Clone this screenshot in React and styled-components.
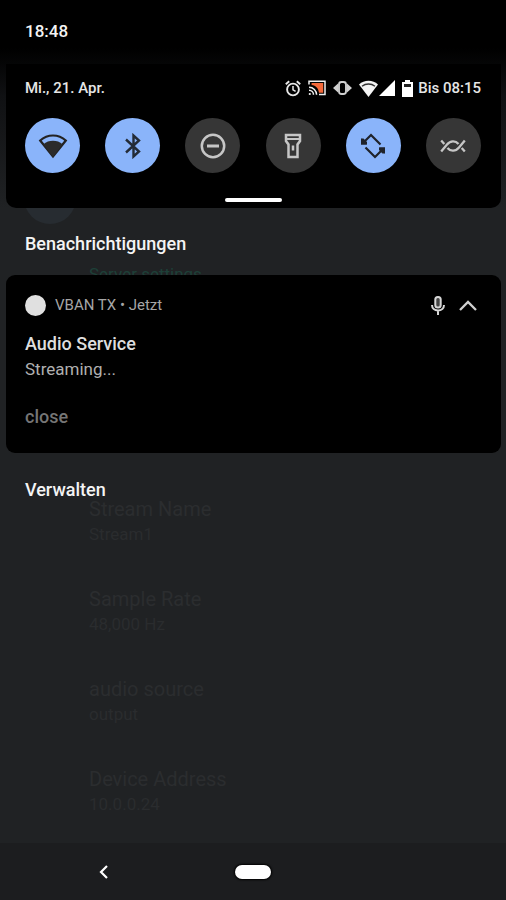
import React from 'react';
import styled, { createGlobalStyle } from 'styled-components';

const settings = [
    { name: 'Stream Name', value: 'Stream1' },
    { name: 'Sample Rate', value: '48,000 Hz' },
    { name: 'audio source', value: 'output' },
    { name: 'Device Address', value: '10.0.0.24' },
];

const tiles = [
    { label: 'WLAN', icon: WifiIcon, active: true },
    { label: 'Bluetooth', icon: BluetoothIcon, active: true },
    { label: 'Bitte nicht stören', icon: DndIcon, active: false },
    { label: 'Taschenlampe', icon: TorchIcon, active: false },
    { label: 'Automatisch drehen', icon: RotateIcon, active: true },
    { label: 'Datensparmodus', icon: CrossedWavesIcon, active: false },
];

function App() {
    return (
        <>
            <GlobalStyle />
            <Screen>
                <AppLayer aria-hidden="true">
                    <Avatar />
                    <SectionName>Server settings</SectionName>
                    <SettingList>
                        {settings.map((s) => (
                            <li key={s.name}>
                                <SettingName>{s.name}</SettingName>
                                <SettingValue>{s.value}</SettingValue>
                            </li>
                        ))}
                    </SettingList>
                </AppLayer>

                <Shade>
                    <Clock>18:48</Clock>
                    <QuickPanel>
                        <StatusRow>
                            <span>Mi., 21. Apr.</span>
                            <StatusIcons>
                                <AlarmIcon />
                                <CastIcon />
                                <VibrateIcon />
                                <SignalPair>
                                    <StatusWifiIcon />
                                    <CellIcon />
                                </SignalPair>
                                <Battery>
                                    <BatteryIcon />
                                    <span>Bis 08:15</span>
                                </Battery>
                            </StatusIcons>
                        </StatusRow>
                        <Tiles>
                            {tiles.map(({ label, icon: Icon, active }) => (
                                <Tile key={label} type="button" aria-label={label} aria-pressed={active} $active={active}>
                                    <Icon />
                                </Tile>
                            ))}
                        </Tiles>
                        <Handle />
                    </QuickPanel>

                    <Heading>Benachrichtigungen</Heading>

                    <Notification>
                        <NotificationHeader>
                            <AppDot />
                            <AppName>VBAN TX • Jetzt</AppName>
                            <MicIcon />
                            <CollapseButton type="button" aria-label="Minimieren">
                                <ChevronUp />
                            </CollapseButton>
                        </NotificationHeader>
                        <NotificationTitle>Audio Service</NotificationTitle>
                        <NotificationText>Streaming...</NotificationText>
                        <CloseButton type="button">close</CloseButton>
                    </Notification>

                    <ManageButton type="button">Verwalten</ManageButton>

                    <NavBar>
                        <NavButton type="button" aria-label="Zurück">
                            <BackIcon />
                        </NavButton>
                        <HomeButton type="button" aria-label="Startbildschirm" />
                        <span />
                    </NavBar>
                </Shade>
            </Screen>
        </>
    );
}

export default App;

/* status bar icons */

function AlarmIcon() {
    return (
        <svg width="16" height="17" viewBox="0 0 16 17" fill="none" stroke="#e8e8e8" strokeWidth="1.9">
            <circle cx="8" cy="9.5" r="5.9" />
            <path d="M8 6v3.8l2.6 1.6" strokeWidth="1.5" />
            <path d="M.8 4.2 4.2 1.3M15.2 4.2l-3.4-2.9" />
        </svg>
    );
}

function CastIcon() {
    return (
        <svg width="18" height="16" viewBox="0 0 18 16" fill="none" stroke="#f0f0f0" strokeWidth="1.5">
            <path d="M3.600 3h11.600v9.700H11C10.500 8.500 8 5.600 3.600 5z" fill="#f4693a" stroke="none" />
            <path d="M1 4.500V1.200h16v13.300h-6" />
            <path d="M1 7.200a7.600 7.600 0 0 1 7.600 7.600M1 10.300a4.500 4.500 0 0 1 4.500 4.500" />
            <circle cx="1.800" cy="14" r="1.100" fill="#f0f0f0" stroke="none" />
        </svg>
    );
}

function VibrateIcon() {
    return (
        <svg width="19" height="16" viewBox="0 0 19 16" fill="#d0d0d0">
            <path d="M5 3.500v9L0 8zM14 3.500v9L19 8z" />
            <rect x="6" y="2" width="7" height="12" rx="2.500" fill="#000" stroke="#d0d0d0" strokeWidth="1.900" />
        </svg>
    );
}

function StatusWifiIcon() {
    return (
        <svg width="19" height="17" viewBox="0 0 19 17" fill="#f5f5f5">
            <path d="M0 4.500a14 14 0 0 1 19 0L9.500 17z" />
            <path d="M3 6.200a10.500 10.500 0 0 1 13 0" fill="none" stroke="#333" strokeWidth="1.400" />
        </svg>
    );
}

function CellIcon() {
    return (
        <svg width="16" height="16" viewBox="0 0 16 16" fill="#fff">
            <path d="M16 0v16H0z" />
        </svg>
    );
}

function BatteryIcon() {
    return (
        <svg width="11" height="17" viewBox="0 0 11 17">
            <path d="M3 0h5v2h3v15H0V2h3z" fill="#fff" />
            <path d="M2 4h7v3H2z" fill="#222" />
        </svg>
    );
}

/* quick settings icons */

function WifiIcon() {
    return (
        <svg width="30" height="26" viewBox="0 0 30 26">
            <path d="M2.200 7.500C9.500 .8 20.500 .8 27.800 7.500L15 23.500z" fill="none" stroke="#232323" strokeWidth="2.200" />
            <path d="M5.500 11.200C10.500 6.600 19.500 6.600 24.500 11.200L15 24z" fill="#2b2b2b" />
        </svg>
    );
}

function BluetoothIcon() {
    return (
        <svg width="18" height="26" viewBox="0 0 18 26" fill="none" stroke="#232b36" strokeWidth="2.400">
            <path d="m2 6.500 13 12-5.500 5V2.500l5.500 5-13 12" />
        </svg>
    );
}

function DndIcon() {
    return (
        <svg width="26" height="26" viewBox="0 0 26 26" fill="none" stroke="#c6c6c6">
            <circle cx="13" cy="13" r="11.200" strokeWidth="2.500" />
            <path d="M7 13h12" strokeWidth="3" />
        </svg>
    );
}

function TorchIcon() {
    return (
        <svg width="18" height="26" viewBox="0 0 18 26" fill="none" stroke="#c6c6c6" strokeWidth="2.500">
            <path d="M2 2h14v6l-2.500 3.500v12.500h-9V11.500L2 8z" />
            <path d="M2 6h14" strokeWidth="2" />
            <path d="M9 12.500v5" />
        </svg>
    );
}

function RotateIcon() {
    return (
        <svg width="26" height="26" viewBox="0 0 26 26" fill="none" stroke="#1f232b" strokeWidth="2.200">
            <path d="M20.500 11.500 11 2 4 9" />
            <path d="M5.500 14.500 15 24l7-7" />
            <path d="M1 5.500v6h6zM25 20.500v-6h-6z" fill="#1f232b" stroke="none" />
            <path d="M1 5.500h2.500l3.500 3.500v2.500H1zM25 20.500h-2.500L19 17v-2.500h6z" fill="#1f232b" stroke="none" />
        </svg>
    );
}

function CrossedWavesIcon() {
    return (
        <svg width="26" height="14" viewBox="0 0 26 14" fill="none" stroke="#c6c6c6" strokeWidth="2.300">
            <path d="M1.200 12.500 7 5.500C10.500 1.300 15.500 1.300 18.500 5" />
            <path d="M24.800 1.500 19 8.500c-3.500 4.200-8.500 4.200-11.500.5" />
            <path d="M1.200 1.500 4.300 5M21.700 9l3.100 3.500" />
        </svg>
    );
}

/* notification and navigation icons */

function MicIcon() {
    return (
        <svg width="14" height="19" viewBox="0 0 14 19" fill="none" stroke="#d6d6d6" strokeWidth="2">
            <rect x="4.300" y="1" width="5.400" height="10.500" rx="2.500" fill="#444" />
            <path d="M1 9c0 3.300 2.600 5.400 6 5.400S13 12.300 13 9M7 14.400V19" />
        </svg>
    );
}

function ChevronUp() {
    return (
        <svg width="18" height="11" viewBox="0 0 18 11" fill="none" stroke="#d0d0d0" strokeWidth="2.300">
            <path d="m1 10 8-8 8 8" />
        </svg>
    );
}

function BackIcon() {
    return (
        <svg width="10" height="16" viewBox="0 0 10 16" fill="none" stroke="#fff" strokeWidth="2.200">
            <path d="M8 2 2 8l6 6" />
        </svg>
    );
}

const GlobalStyle = createGlobalStyle`
    * {
        box-sizing: border-box;
    }

    body {
        margin: 0;
        background: #202224;
        color: #f4f4f4;
        font-family: Roboto, "Liberation Sans", sans-serif;
    }

    button {
        margin: 0;
        padding: 0;
        border: none;
        background: none;
        color: inherit;
        font: inherit;
        cursor: pointer;
    }

    svg {
        display: block;
        flex-shrink: 0;
    }

    p, h1, h2, ul {
        margin: 0;
        padding: 0;
    }
`;

const Screen = styled.div`
    display: grid;
    min-height: 100vh;
    background: linear-gradient(#000 48px, #101113 96px, #202224 208px);
`;

/* the dimmed app behind the shade */
const AppLayer = styled.div`
    grid-area: 1 / 1;
    padding: 172px 24px 0;
`;

const Avatar = styled.div`
    width: 52px;
    height: 52px;
    border-radius: 50%;
    background: #272c31;
`;

const SectionName = styled.p`
    margin: 40px 0 0 65px;
    font-size: 17px;
    line-height: 20px;
    color: #1d4038;
`;

const SettingList = styled.ul`
    display: flex;
    flex-direction: column;
    gap: 40px;
    margin: 212px 0 0 65px;
    list-style: none;
`;

const SettingName = styled.p`
    font-size: 20px;
    line-height: 26px;
    color: #2b2d2f;
`;

const SettingValue = styled.p`
    font-size: 17px;
    line-height: 24px;
    color: #2a2c2e;
`;

const Shade = styled.div`
    grid-area: 1 / 1;
    display: flex;
    flex-direction: column;
    z-index: 1;
`;

const Clock = styled.div`
    padding: 20px 25px 0;
    font-size: 17px;
    line-height: 22px;
    font-weight: 500;
`;

const QuickPanel = styled.section`
    display: flex;
    flex-direction: column;
    margin: 22px 5px 0 6px;
    padding: 14px 20px 6px 19px;
    border-radius: 0 0 10px 10px;
    background: #000;
`;

const StatusRow = styled.div`
    display: flex;
    align-items: center;
    justify-content: space-between;
    font-size: 15px;
    line-height: 20px;
    font-weight: 500;
    color: #e6e6e6;
`;

const StatusIcons = styled.div`
    display: flex;
    align-items: center;
    gap: 7px;
`;

const SignalPair = styled.div`
    display: flex;
    align-items: center;
    gap: 1px;
`;

const Battery = styled.div`
    display: flex;
    align-items: center;
    gap: 5px;
`;

const Tiles = styled.div`
    display: flex;
    justify-content: space-between;
    margin-top: 20px;
`;

const Tile = styled.button`
    display: flex;
    align-items: center;
    justify-content: center;
    width: 55px;
    height: 55px;
    border-radius: 50%;
    background: ${({ $active }) => ($active ? '#8ab4fa' : '#363636')};
`;

const Handle = styled.div`
    align-self: center;
    width: 57px;
    height: 4px;
    margin-top: 25px;
    border-radius: 2px;
    background: #fff;
`;

const Heading = styled.h1`
    padding: 24px 25px 19px;
    font-size: 18px;
    line-height: 24px;
    font-weight: 500;
`;

const Notification = styled.section`
    display: flex;
    flex-direction: column;
    align-items: flex-start;
    margin: 0 5px 0 6px;
    padding: 17px 19px 24px;
    border-radius: 9px;
    background: #000;
`;

const NotificationHeader = styled.div`
    display: flex;
    align-items: center;
    align-self: stretch;
    height: 26px;
    padding-right: 5px;
`;

const AppDot = styled.span`
    width: 21px;
    height: 21px;
    border-radius: 50%;
    background: #e0e0e0;
`;

const AppName = styled.span`
    flex: 1;
    margin-left: 9px;
    font-size: 15px;
    color: #a6a6a6;
`;

const CollapseButton = styled.button`
    margin-left: 14px;
`;

const NotificationTitle = styled.h2`
    margin-top: 13px;
    font-size: 18px;
    line-height: 26px;
    font-weight: 500;
    color: #dedede;
`;

const NotificationText = styled.p`
    font-size: 17px;
    line-height: 24px;
    color: #b0b0b0;
`;

const CloseButton = styled.button`
    margin-top: 24px;
    font-size: 18px;
    line-height: 24px;
    font-weight: 500;
    color: #757575;
`;

const ManageButton = styled.button`
    align-self: flex-start;
    margin: 25px 25px;
    font-size: 18px;
    line-height: 24px;
    font-weight: 500;
`;

const NavBar = styled.nav`
    display: grid;
    grid-template-columns: 1fr auto 1fr;
    align-items: center;
    height: 57px;
    margin-top: auto;
    background: #1c1d1f;
`;

const NavButton = styled.button`
    display: flex;
    justify-self: center;
    margin-right: 28px;
`;

const HomeButton = styled.button`
    width: 36px;
    height: 14px;
    border-radius: 8px;
    background: #fff;
    box-shadow: 0 0 2px 1px #000;
`;
